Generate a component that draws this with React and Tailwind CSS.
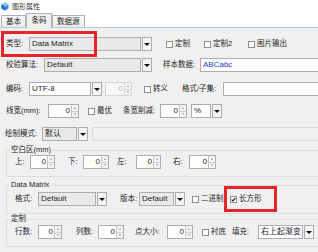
const FONT = "font-['Liberation_Sans','Noto_Sans_CJK_SC',sans-serif]"

function Label({ className = '', children }) {
  return (
    <div className={`shrink-0 whitespace-nowrap text-[7.5px] leading-none text-[#1e1e1e] ${className}`}>{children}</div>
  )
}

function Arrow() {
  return <div className="h-0 w-0 border-x-[3px] border-t-[3px] border-x-transparent border-t-[#111]" />
}

function Combo({ className = '', value, gray }) {
  return (
    <div className={`flex h-[14px] shrink-0 ${className}`}>
      <div
        className={`flex min-w-0 flex-1 items-center border border-[#adadad] px-[2px] text-[8px] leading-none text-[#1e1e1e] whitespace-nowrap overflow-hidden ${
          gray ? 'bg-[#e9e9e9]' : 'bg-white'
        }`}
      >
        {value}
      </div>
      <div className="ml-[1px] flex w-[10px] items-center justify-center border border-[#adadad] bg-[#f4f4f4]">
        <Arrow />
      </div>
    </div>
  )
}

function Spinner({ className = '', disabled }) {
  return (
    <div
      className={`flex h-[14px] shrink-0 border ${
        disabled ? 'border-[#d6d6d6] bg-[#f7f7f7] text-[#b8b8b8]' : 'border-[#abadb3] bg-white text-[#1e1e1e]'
      } ${className}`}
    >
      <div className="flex flex-1 items-center justify-end pr-[1px] text-[8px] leading-none">0</div>
      <div className={`flex w-[7px] flex-col border-l ${disabled ? 'border-[#dcdcdc]' : 'border-[#c4c4c4]'}`}>
        <div className="flex flex-1 items-center justify-center border-b border-[#d0d0d0] bg-[#f3f3f3]">
          <div className="h-0 w-0 border-x-[1.5px] border-b-[2px] border-x-transparent border-b-[#9a9a9a]" />
        </div>
        <div className="flex flex-1 items-center justify-center bg-[#f3f3f3]">
          <div className="h-0 w-0 border-x-[1.5px] border-t-[2px] border-x-transparent border-t-[#9a9a9a]" />
        </div>
      </div>
    </div>
  )
}

function Check({ className = '', label, checked }) {
  return (
    <div className={`flex shrink-0 items-center gap-[2px] ${className}`}>
      <div className="flex h-[7px] w-[7px] items-center justify-center border border-[#8e8f8f] bg-white">
        {checked ? (
          <svg width="5" height="5" viewBox="0 0 5 5">
            <path d="M0.6 2.6 L2 3.9 L4.4 1" stroke="#222" strokeWidth="1.2" fill="none" />
          </svg>
        ) : null}
      </div>
      <span className="whitespace-nowrap text-[7.5px] leading-none text-[#1e1e1e]">{label}</span>
    </div>
  )
}

function Field({ className = '', children, disabled }) {
  return (
    <div
      className={`flex h-[14px] shrink-0 items-center border px-[2px] text-[8px] leading-none ${
        disabled ? 'border-[#d9d9d9] bg-[#f0f0f0]' : 'border-[#abadb3] bg-white'
      } ${className}`}
    >
      {children}
    </div>
  )
}

function Group({ title, className = '', children }) {
  return (
    <div className={`relative ml-[6px] w-[316px] border border-[#d5dfe5] ${className}`}>
      <span className="absolute left-[3px] top-[-5px] bg-[#f0f0f0] px-[1px] text-[7.5px] leading-none text-[#1e1e1e]">
        {title}
      </span>
      {children}
    </div>
  )
}

function Tab({ label, active }) {
  return active ? (
    <div className="relative z-10 -mb-px flex h-[15px] w-[26px] items-center justify-center border border-b-0 border-[#a9b6c4] bg-[#f0f0f0] text-[7.5px] text-[#1e1e1e]">
      {label}
    </div>
  ) : (
    <div className="flex h-[12px] items-center justify-center border border-b-0 border-[#b0b0b0] bg-gradient-to-b from-[#fafafa] to-[#ececec] px-[4px] text-[7.5px] text-[#1e1e1e]">
      {label}
    </div>
  )
}

export default function App() {
  return (
    <div className={`relative flex h-[252px] w-[318px] flex-col overflow-hidden bg-white ${FONT}`}>
      <div className="flex h-[13px] shrink-0 items-center pl-[1px]">
        <svg width="8" height="9" viewBox="0 0 8 9">
          <path d="M4 0.5 L7.5 2.5 L7.5 6.5 L4 8.5 L0.5 6.5 L0.5 2.5 Z" fill="#2f8de4" />
          <path d="M4 0.5 L7.5 2.5 L4 4.5 L0.5 2.5 Z" fill="#8ec9f7" />
          <path d="M4 4.5 L4 8.5 L0.5 6.5 L0.5 2.5 Z" fill="#1f6fc4" />
        </svg>
        <span className="ml-[3px] text-[7px] leading-none text-[#333]">图形属性</span>
      </div>

      <div className="flex h-[15px] shrink-0 items-end border-b border-[#b9cadb] pl-[1px]">
        <Tab label="基本" />
        <Tab label="条码" active />
        <Tab label="数据源" />
      </div>

      <div className="flex flex-1 flex-col bg-[#f0f0f0]">
        <div className="mt-[9px] flex h-[14px] items-center pl-[6px]">
          <Label className="w-[23px]">类型:</Label>
          <Combo className="w-[123px]" value="Data Matrix" gray />
          <Check className="ml-[14px] w-[38px]" label="定制" />
          <Check className="w-[44px]" label="定制2" />
          <Check label="图片输出" />
        </div>

        <div className="mt-[7px] flex h-[14px] items-center pl-[6px]">
          <Label className="w-[38px]">校验算法:</Label>
          <Combo className="w-[108px]" value="Default" gray />
          <Label className="ml-[11px] w-[37px]">样本数据:</Label>
          <Field className="w-[120px] text-[#2440d8]">ABCabc</Field>
        </div>

        <div className="mt-[10px] flex h-[14px] items-center pl-[6px]">
          <Label className="w-[23px]">编码:</Label>
          <Combo className="w-[73px]" value="UTF-8" />
          <Spinner className="ml-[3px] w-[27px]" disabled />
          <Check className="ml-[12px] w-[38px]" label="转义" />
          <Label className="w-[41px]">格式/子集:</Label>
          <Field className="w-[100px]" />
        </div>

        <div className="mt-[8px] flex h-[14px] items-center pl-[6px]">
          <Label className="w-[42px]">线宽(mm):</Label>
          <Spinner className="w-[31px]" />
          <Check className="ml-[9px] w-[35px]" label="最优" />
          <Label className="w-[37px]">条宽削减:</Label>
          <Spinner className="w-[27px]" />
          <Combo className="ml-[4px] w-[31px]" value="%" />
        </div>

        <div className="mt-[9px] flex h-[14px] items-center pl-[5px]">
          <Label className="w-[37px]">绘制模式:</Label>
          <Combo className="w-[46px]" value="默认" gray />
          <Field className="ml-[4px] w-[230px]" disabled />
        </div>

        <Group title="空白区(mm)" className="mt-[9px] pb-[7px] pt-[4px]">
          <div className="flex h-[14px] items-center pl-[8px]">
            <Label className="w-[15px]">上:</Label>
            <Spinner className="w-[25px]" />
            <Label className="ml-[13px] w-[15px]">下:</Label>
            <Spinner className="w-[26px]" />
            <Label className="ml-[8px] w-[19px]">左:</Label>
            <Spinner className="w-[25px]" />
            <Label className="ml-[12px] w-[16px]">右:</Label>
            <Spinner className="w-[27px]" />
          </div>
        </Group>

        <Group title="Data Matrix" className="mt-[8px] pb-[7px] pt-[6px]">
          <div className="flex h-[14px] items-center pl-[8px]">
            <Label className="w-[23px]">格式:</Label>
            <Combo className="w-[69px]" value="Default" gray />
            <Label className="ml-[13px] w-[19px]">版本:</Label>
            <Combo className="w-[46px]" value="Default" gray />
            <Check className="ml-[7px] w-[38px]" label="二进制" />
            <Check label="长方形" checked />
          </div>
        </Group>

        <Group title="定制" className="mt-[5px] pb-[7px] pt-[5px]">
          <div className="flex h-[14px] items-center pl-[8px]">
            <Label className="w-[23px]">行数:</Label>
            <Spinner className="w-[24px]" />
            <Label className="ml-[14px] w-[22px]">列数:</Label>
            <Spinner className="w-[26px]" />
            <Label className="ml-[11px] w-[32px]">点大小:</Label>
            <Spinner className="w-[26px]" />
            <Check className="ml-[9px] w-[30px]" label="衬底" />
            <Label className="w-[26px]">填充:</Label>
            <Combo className="w-[56px]" value="右上起渐变" />
          </div>
        </Group>
      </div>

      <div className="absolute left-[1px] top-[31px] h-[26px] w-[96px] border-[3px] border-[#e5252a]" />
      <div className="absolute left-[224px] top-[186px] h-[26px] w-[53px] border-[3px] border-[#e5252a]" />
    </div>
  )
}
